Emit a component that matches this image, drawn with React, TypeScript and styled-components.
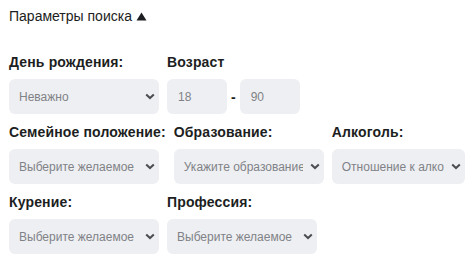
import styled, { createGlobalStyle } from 'styled-components'

const GlobalStyle = createGlobalStyle`
  body {
    margin: 0;
    background: #fff;
    font-family: "Liberation Sans", Arial, sans-serif;
    color: #1c1e21;
  }
`

const Page = styled.div`
  padding: 8px 11px 0 9px;
`

const Header = styled.div`
  font-size: 14px;
  line-height: 17px;
  margin-bottom: 29px;
  display: flex;
  align-items: center;
  gap: 4px;
`

const Row = styled.div`
  display: flex;
  gap: 8px;
  margin-bottom: 10px;
`

const Field = styled.div`
  display: flex;
  flex-direction: column;
  flex: none;
`

const Label = styled.div`
  font-size: 14px;
  font-weight: 700;
  letter-spacing: 0.15px;
  line-height: 17px;
  margin-bottom: 8px;
  white-space: nowrap;
`

const SelectBox = styled.div<{ $width?: number }>`
  width: ${({ $width }) => $width ?? 150}px;
  height: 35px;
  box-sizing: border-box;
  background: #eeeff2;
  border-radius: 6px;
  display: flex;
  align-items: center;
  padding: 0 4px 0 10px;
  font-size: 12px;
  color: #808287;
`

const SelectText = styled.span`
  flex: 1;
  min-width: 0;
  overflow: hidden;
  white-space: nowrap;
`

const Chevron = styled.svg`
  flex: none;
  margin-left: 7px;
`

const AgeRow = styled.div`
  display: flex;
  align-items: center;
  gap: 4px;
`

const AgeInput = styled.div`
  width: 60px;
  height: 35px;
  box-sizing: border-box;
  background: #eeeff2;
  border-radius: 6px;
  padding-left: 11px;
  display: flex;
  align-items: center;
  font-size: 12px;
  color: #808287;
`

const Dash = styled.span`
  font-size: 14px;
  font-weight: 700;
  color: #1c1e21;
`

function Select({ text, width }: { text: string; width?: number }) {
  return (
    <SelectBox $width={width}>
      <SelectText>{text}</SelectText>
      <Chevron width="10" height="7" viewBox="0 0 10 7">
        <path d="M1.2 1.4 L5 5 L8.8 1.4" fill="none" stroke="#4b4d52" strokeWidth="2" />
      </Chevron>
    </SelectBox>
  )
}

export default function App() {
  return (
    <>
      <GlobalStyle />
      <Page>
        <Header>
          Параметры поиска
          <svg width="11" height="9" viewBox="0 0 11 9">
            <path d="M5.5 0.5 L10.5 8.5 L0.5 8.5 Z" fill="#1c1e21" />
          </svg>
        </Header>
        <Row>
          <Field>
            <Label>День рождения:</Label>
            <Select text="Неважно" />
          </Field>
          <Field>
            <Label>Возраст</Label>
            <AgeRow>
              <AgeInput>18</AgeInput>
              <Dash>-</Dash>
              <AgeInput>90</AgeInput>
            </AgeRow>
          </Field>
        </Row>
        <Row>
          <Field>
            <Label>Семейное положение:</Label>
            <Select text="Выберите желаемое" />
          </Field>
          <Field>
            <Label>Образование:</Label>
            <Select text="Укажите образование" />
          </Field>
          <Field>
            <Label>Алкоголь:</Label>
            <Select text="Отношение к алкоголю" width={133} />
          </Field>
        </Row>
        <Row>
          <Field>
            <Label>Курение:</Label>
            <Select text="Выберите желаемое" />
          </Field>
          <Field>
            <Label>Профессия:</Label>
            <Select text="Выберите желаемое" />
          </Field>
        </Row>
      </Page>
    </>
  )
}
